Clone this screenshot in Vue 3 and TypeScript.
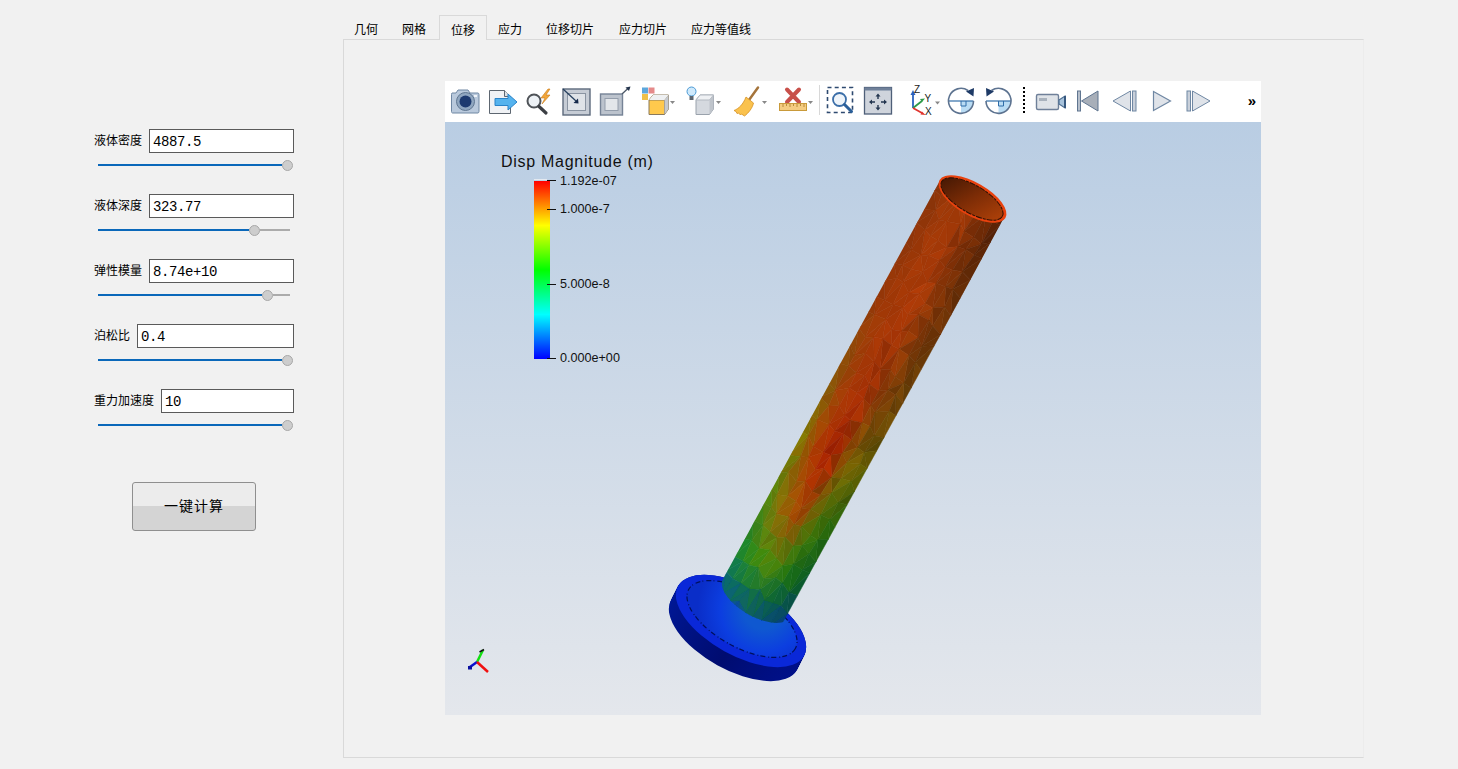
<script setup lang="ts">
const tabs = ["几何", "网格", "位移", "应力", "位移切片", "应力切片", "应力等值线"];
const activeTab = "位移";

const fields = [
  { label: "液体密度", value: "4887.5", fill: 184 },
  { label: "液体深度", value: "323.77", fill: 151 },
  { label: "弹性模量", value: "8.74e+10", fill: 164 },
  { label: "泊松比", value: "0.4", fill: 184 },
  { label: "重力加速度", value: "10", fill: 184 },
];

// colour samples on the tube, rows run from the open end to the base, columns left to right
const rows = [0, 0.3, 0.5, 0.65, 0.8, 0.92, 0.99, 1.08];
const samples: number[][][] = [
  [[132, 50, 10], [160, 58, 8], [160, 56, 7], [120, 44, 6], [80, 30, 6]],
  [[150, 56, 8], [166, 56, 6], [164, 54, 6], [132, 54, 6], [100, 50, 6]],
  [[128, 88, 8], [168, 58, 6], [166, 46, 4], [128, 62, 6], [104, 72, 6]],
  [[124, 130, 2], [172, 60, 2], [176, 28, 0], [120, 96, 2], [84, 86, 2]],
  [[66, 136, 14], [150, 110, 4], [164, 64, 2], [70, 116, 6], [28, 100, 14]],
  [[22, 136, 50], [56, 142, 14], [84, 136, 8], [30, 116, 16], [8, 88, 40]],
  [[8, 110, 110], [14, 120, 70], [20, 116, 50], [10, 100, 60], [6, 72, 90]],
  [[10, 50, 200], [10, 60, 190], [10, 70, 170], [10, 60, 170], [8, 50, 170]],
];

let seed = 41;
function rnd() {
  seed = (seed * 16807) % 2147483647;
  return seed / 2147483647;
}

function colourAt(u: number, v: number, amp: number) {
  let r = 0;
  while (r < rows.length - 2 && v > rows[r + 1]) r++;
  const tv = Math.min(1, Math.max(0, (v - rows[r]) / (rows[r + 1] - rows[r])));
  const cu = Math.max(0, Math.min(3.999, ((u + 1) / 2) * 4));
  const c = Math.floor(cu);
  const tu = cu - c;
  const k = 1 + (rnd() - 0.5) * amp;
  const out = [0, 1, 2].map((i) => {
    const a = samples[r][c][i] * (1 - tu) + samples[r][c + 1][i] * tu;
    const b = samples[r + 1][c][i] * (1 - tu) + samples[r + 1][c + 1][i] * tu;
    return Math.min(255, Math.round((a * (1 - tv) + b * tv) * k));
  });
  return `rgb(${out[0]},${out[1]},${out[2]})`;
}

function place(u: number, v: number) {
  return [972 - 218 * v + 32.5 * u, 199 + 398 * v + 18.5 * u];
}

// faceted tube surface
const facets: { points: string; fill: string }[] = [];
const nu = 8;
const nv = 26;
const grid: number[][][] = [];
for (let j = 0; j <= nv; j++) {
  const line: number[][] = [];
  for (let i = 0; i <= nu; i++) {
    const ju = i === 0 || i === nu ? 0 : (rnd() - 0.5) * 0.1;
    const jv = (rnd() - 0.5) * 0.02;
    line.push([-1 + (2 * i) / nu + ju, (j / nv) * 1.14 - 0.02 + jv]);
  }
  grid.push(line);
}
for (let j = 0; j < nv; j++) {
  for (let i = 0; i < nu; i++) {
    const a = grid[j][i];
    const b = grid[j][i + 1];
    const c = grid[j + 1][i + 1];
    const d = grid[j + 1][i];
    const tris = rnd() > 0.5 ? [[a, b, c], [a, c, d]] : [[a, b, d], [b, c, d]];
    for (const t of tris) {
      const mu = (t[0][0] + t[1][0] + t[2][0]) / 3;
      const mv = (t[0][1] + t[1][1] + t[2][1]) / 3;
      let amp = mu > -0.1 ? 0.24 : 0.07;
      if (mv > 0.9) amp = 0.02;
      else if (mv > 0.72) amp = 0.1;
      const pts = t.map((p) => place(p[0], p[1]).map((n) => n.toFixed(1)).join(",")).join(" ");
      facets.push({ points: pts, fill: colourAt(mu, mv, amp) });
    }
  }
}

const discSteps = Array.from({ length: 16 }, (_, i) => ({
  cx: 734 + (7 * i) / 15,
  cy: 635 - (14 * i) / 15,
}));
</script>

<template>
  <div class="app">
    <aside class="side">
      <div v-for="f in fields" :key="f.label" class="field">
        <div class="field-row">
          <label class="field-label">{{ f.label }}</label>
          <input class="field-input" :value="f.value" readonly />
        </div>
        <div class="slider">
          <div class="slider-fill" :style="{ width: f.fill + 'px' }"></div>
          <div class="slider-knob"></div>
          <div class="slider-rest"></div>
        </div>
      </div>
      <button class="run" type="button">一键计算</button>
    </aside>

    <main class="main">
      <nav class="tabs">
        <div v-for="t in tabs" :key="t" class="tab" :class="{ active: t === activeTab }">{{ t }}</div>
      </nav>
      <section class="pane">
        <div class="viewer">
          <div class="toolbar">
            <!-- camera -->
            <svg width="37" height="41" viewBox="0 0 37 41">
              <path d="M5 12h4l2-3h10l2 3h8a1.500 1.500 0 0 1 1 1.500v17a1.500 1.500 0 0 1-1 1.500H5.500A1.500 1.500 0 0 1 4.500 30.500v-17A1.500 1.500 0 0 1 5 12z" fill="#b9c9dc" stroke="#6f87a3"/>
              <circle cx="18.500" cy="20.500" r="9" fill="#8fa6c0" stroke="#5f7691"/>
              <circle cx="18.500" cy="20.500" r="6" fill="#1d3a70"/>
              <rect x="27" y="14" width="3" height="2" fill="#eef3f8"/>
            </svg>
            <!-- export -->
            <svg width="37" height="41" viewBox="0 0 37 41">
              <path d="M5.500 9.500h15l6 6v17h-21z" fill="#f0f2f5" stroke="#5d6670"/>
              <path d="M20.500 9.500v6h6" fill="#dde1e6" stroke="#5d6670"/>
              <path d="M11 17.500h13v-4.500l9 8-9 8v-4.500H11z" fill="#55b3ee" stroke="#2a83c8"/>
            </svg>
            <!-- lens with spark -->
            <svg width="37" height="41" viewBox="0 0 37 41">
              <circle cx="13" cy="20" r="6.500" fill="#eef2f6" stroke="#4f5358" stroke-width="2"/>
              <path d="M18 25.500l7 6.500" stroke="#3c3f44" stroke-width="3.200" stroke-linecap="round"/>
              <path d="M27 8l-7 9h4l-3 6 8-9h-4l4-6z" fill="#f2a63a" stroke="#c77a1a" stroke-width=".6"/>
            </svg>
            <!-- reset to box -->
            <svg width="37" height="41" viewBox="0 0 37 41">
              <rect x="5" y="8" width="27" height="26" fill="#c6ccd5" stroke="#5d6a7c" stroke-width="1.400"/>
              <rect x="9.500" y="12.500" width="18" height="17" fill="#dfe3e8" stroke="#8a94a2"/>
              <path d="M5 8l13 12" stroke="#27405f" stroke-width="1.300"/>
              <path d="M20.500 22.500l-.5-5-4.500 4.500z" fill="#14284a"/>
            </svg>
            <!-- zoom out box -->
            <svg width="37" height="41" viewBox="0 0 37 41">
              <rect x="5.500" y="13" width="22" height="21" fill="#bcc3cd" stroke="#768396" stroke-width="1.400"/>
              <rect x="10" y="17.500" width="13" height="12" fill="#e3e6ea" stroke="#949eac"/>
              <path d="M27 13l7-6.500" stroke="#4b5868" stroke-width="1.300"/>
              <path d="M35.500 5.500l-5 1 3.500 3.500z" fill="#24344c"/>
            </svg>
            <!-- coloured box -->
            <svg width="48" height="41" viewBox="0 0 48 41">
              <rect x="10" y="6.500" width="6" height="6" fill="#5da7dc"/>
              <rect x="16.500" y="6.500" width="6" height="6" fill="#e58a8a"/>
              <rect x="10" y="13" width="6" height="6" fill="#f0c04a"/>
              <path d="M17 19l4-5h15.500v14l-4 5.500H17z" fill="#ffc94d" stroke="#8a7a5c"/>
              <path d="M17 19h15.500v14.500M32.500 19l4-5" fill="none" stroke="#8a7a5c"/>
              <path d="M17 19l4-5h15.500l-4 5z" fill="#eef0f2"/>
              <path d="M32.500 19l4-5v14l-4 5.500z" fill="#c5c9cf"/>
              <path d="M38 20h5l-2.500 3z" fill="#888"/>
            </svg>
            <!-- light bulb box -->
            <svg width="46" height="41" viewBox="0 0 46 41">
              <circle cx="11.500" cy="10.500" r="4.500" fill="#cfe9fb" stroke="#4b9ad5"/>
              <rect x="9.500" y="15" width="4" height="4" fill="#5d6670"/>
              <path d="M16 19l4-5h13.500v14l-4 5.500H16z" fill="#d5d9df" stroke="#9aa2ac"/>
              <path d="M16 19l4-5h13.500l-4 5z" fill="#eff1f4" stroke="#b3b9c1"/>
              <path d="M29.500 19l4-5v14l-4 5.500z" fill="#bfc4cb"/>
              <path d="M36 20h5l-2.500 3z" fill="#888"/>
            </svg>
            <!-- broom -->
            <svg width="46" height="41" viewBox="0 0 46 41">
              <path d="M32 6.500L23 19" stroke="#a5743b" stroke-width="2.500" stroke-linecap="round"/>
              <path d="M20 16l7.500 6c-1 5-5 10-9 13l-3-2-1 1-2-2-1.500 .5-1-2-2-1c5-2 9-6 12-13.500z" fill="#fac24e" stroke="#d59022" stroke-width=".8"/>
              <path d="M36 20h5l-2.500 3z" fill="#888"/>
            </svg>
            <!-- ruler with cross -->
            <svg width="46" height="41" viewBox="0 0 46 41">
              <path d="M15 8.500l12 12.500M27 8.500L15 21" stroke="#c8504a" stroke-width="4" stroke-linecap="round"/>
              <rect x="7.500" y="22.500" width="27" height="7" fill="#f5cc82" stroke="#c99a3a"/>
              <path d="M11 23v3M14.500 23v2M18 23v3M21.500 23v2M25 23v3M28.500 23v2M32 23v3" stroke="#a87c2a" stroke-width=".8"/>
              <path d="M36 20h5l-2.500 3z" fill="#888"/>
            </svg>
            <div class="tool-sep"></div>
            <!-- zoom to box -->
            <svg width="37" height="41" viewBox="0 0 37 41">
              <rect x="5.500" y="6.500" width="25" height="25" fill="none" stroke="#2e4a70" stroke-width="1.600" stroke-dasharray="4 3.200"/>
              <circle cx="17.500" cy="18.500" r="6.500" fill="#eef4fa" stroke="#3b6ea8" stroke-width="1.800"/>
              <path d="M22.500 23.500l7 7" stroke="#2a5f9a" stroke-width="3" stroke-linecap="round"/>
            </svg>
            <!-- pan frame -->
            <svg width="37" height="41" viewBox="0 0 37 41">
              <rect x="5.500" y="6.500" width="27" height="26.500" fill="#cfd4dc" stroke="#4e5f78" stroke-width="1.300"/>
              <rect x="5.500" y="6.500" width="27" height="3" fill="#6f8099"/>
              <path d="M19 12.500l-2.500 3h5zM19 29.500l-2.500-3h5zM10 21l3-2.500v5zM28 21l-3-2.500v5z" fill="#23354f"/>
              <path d="M19 15v3M19 24v3M13 21h3M22 21h3" stroke="#23354f" stroke-width="1.400"/>
            </svg>
            <!-- axes -->
            <svg width="47" height="41" viewBox="0 0 47 41">
              <path d="M17 27V13" stroke="#2b62c0" stroke-width="1.800"/>
              <path d="M17 9l-2.500 5h5z" fill="#2b62c0"/>
              <path d="M17 27l9-7" stroke="#2f9a48" stroke-width="1.800"/>
              <path d="M29 17.500l-5 .5 2 3z" fill="#2f9a48"/>
              <path d="M17 27l9 5" stroke="#e0342e" stroke-width="1.800"/>
              <path d="M29.500 34l-5-.5 1.500-3z" fill="#e0342e"/>
              <text x="18" y="12" class="axis-letter">Z</text>
              <text x="28.500" y="21" class="axis-letter">Y</text>
              <text x="29" y="34" class="axis-letter">X</text>
              <path d="M39 20.500h5l-2.500 3z" fill="#888"/>
            </svg>
            <!-- rotate cw -->
            <svg width="37" height="41" viewBox="0 0 37 41">
              <path d="M18 20h12a12 12 0 0 1-12 12z" fill="#b9dcf4"/>
              <path d="M18 20v5h5v-5" fill="none" stroke="#2f6da8"/>
              <path d="M5.500 20h25" stroke="#2f6da8" stroke-width="1.200"/>
              <path d="M25 9.500A12.500 12.500 0 1 0 30.500 20" fill="none" stroke="#5d7390" stroke-width="1.600"/>
              <path d="M31 7l-.5 8.500-7.500-5z" fill="#1e3a66"/>
            </svg>
            <!-- rotate ccw -->
            <svg width="37" height="41" viewBox="0 0 37 41">
              <path d="M18.500 20h12a12 12 0 0 1-12 12z" fill="#b9dcf4"/>
              <path d="M18.500 20v5h5v-5" fill="none" stroke="#2f6da8"/>
              <path d="M6 20h25" stroke="#2f6da8" stroke-width="1.200"/>
              <path d="M11.500 9.500A12.500 12.500 0 1 1 6 20" fill="none" stroke="#5d7390" stroke-width="1.600"/>
              <path d="M6 7l.5 8.500 7.500-5z" fill="#1e3a66"/>
            </svg>
            <div class="tool-dots"></div>
            <!-- video camera -->
            <svg width="40" height="41" viewBox="0 0 40 41">
              <rect x="5.500" y="13.500" width="22" height="15" rx="1.500" fill="#dfe3e8" stroke="#6f8099" stroke-width="1.400"/>
              <rect x="8" y="17" width="8" height="3" fill="#a9b2bd"/>
              <path d="M28 19l6-4v12l-6-4z" fill="#a8c3dc" stroke="#4e6f93" stroke-width="1.200"/>
              <rect x="33" y="15" width="2" height="12" fill="#38597f"/>
            </svg>
            <!-- first -->
            <svg width="35" height="41" viewBox="0 0 35 41">
              <rect x="6.500" y="10" width="3" height="20" fill="#b6bfcb" stroke="#5f7590"/>
              <path d="M27 10v20L10.500 20z" fill="#a8afb9" stroke="#5f7590"/>
            </svg>
            <!-- previous -->
            <svg width="37" height="41" viewBox="0 0 37 41">
              <path d="M24.500 10v20L7 20z" fill="#dfe3e9" stroke="#6f87a3"/>
              <rect x="26.500" y="10" width="3.500" height="20" fill="#c9d0da" stroke="#6f87a3"/>
            </svg>
            <!-- play -->
            <svg width="37" height="41" viewBox="0 0 37 41">
              <path d="M10.500 10.500v19l17-9.500z" fill="#dfe3e9" stroke="#6f87a3" stroke-width="1.200"/>
            </svg>
            <!-- next -->
            <svg width="37" height="41" viewBox="0 0 37 41">
              <rect x="7" y="10" width="3.500" height="20" fill="#c9d0da" stroke="#6f87a3"/>
              <path d="M12.500 10v20L30 20z" fill="#dfe3e9" stroke="#6f87a3"/>
            </svg>
            <span class="tool-more">»</span>
          </div>

          <svg class="scene" width="816" height="593" viewBox="445 122 816 593">
            <defs>
              <linearGradient id="bar" x1="0" y1="0" x2="0" y2="1">
                <stop offset="0" stop-color="#ff0000"/>
                <stop offset="0.25" stop-color="#ffff00"/>
                <stop offset="0.5" stop-color="#00ff00"/>
                <stop offset="0.75" stop-color="#00ffff"/>
                <stop offset="1" stop-color="#0000ff"/>
              </linearGradient>
              <linearGradient id="discSide" gradientUnits="userSpaceOnUse" x1="670" y1="600" x2="800" y2="680">
                <stop offset="0" stop-color="#001a9c"/>
                <stop offset="0.6" stop-color="#000c70"/>
                <stop offset="1" stop-color="#001190"/>
              </linearGradient>
              <radialGradient id="cone" gradientUnits="userSpaceOnUse" cx="756" cy="600" r="66">
                <stop offset="0.3" stop-color="#0f58d0"/>
                <stop offset="0.65" stop-color="#0c3ee0"/>
                <stop offset="1" stop-color="#0a2ec8"/>
              </radialGradient>
              <linearGradient id="bore" gradientUnits="userSpaceOnUse" x1="945" y1="185" x2="995" y2="215">
                <stop offset="0" stop-color="#4a1a04"/>
                <stop offset="0.5" stop-color="#7c2c06"/>
                <stop offset="1" stop-color="#a83e08"/>
              </linearGradient>
              <clipPath id="tube">
                <path d="M940 180.500L722.500 580a38 18 30 0 0 68 36L1004 217.500z"/>
              </clipPath>
            </defs>

            <!-- base disc -->
            <ellipse
              v-for="(s, i) in discSteps"
              :key="i"
              :cx="s.cx"
              :cy="s.cy"
              rx="72"
              ry="34.500"
              :transform="`rotate(29 ${s.cx} ${s.cy})`"
              fill="url(#discSide)"
            />
            <ellipse cx="741" cy="621" rx="72" ry="34.500" transform="rotate(29 741 621)" fill="#0a28d8"/>
            <ellipse cx="742" cy="619" rx="61" ry="28" transform="rotate(29 742 619)" fill="url(#cone)" stroke="#00105c" stroke-width="1.200" stroke-dasharray="5 2 1 3"/>

            <!-- tube -->
            <g clip-path="url(#tube)">
              <polygon v-for="(f, i) in facets" :key="i" :points="f.points" :fill="f.fill" :stroke="f.fill" stroke-width="0.5"/>
            </g>

            <!-- open end -->
            <ellipse cx="972.500" cy="199" rx="38" ry="16.500" transform="rotate(30 972.500 199)" fill="#e8420e"/>
            <ellipse cx="972" cy="199" rx="35" ry="13.800" transform="rotate(30 972 199)" fill="url(#bore)" stroke="#2a1004" stroke-width="1" stroke-dasharray="6 1 3 1"/>

            <!-- scalar bar -->
            <text x="501" y="167" class="bar-title">Disp Magnitude (m)</text>
            <rect x="534" y="181" width="16" height="178" fill="url(#bar)"/>
            <path d="M534 179.500H547" stroke="#e4e9f0" stroke-width="1"/>
            <path d="M547 180.500H556M547 209.500H556M547 284.500H556M547 358.500H556" stroke="#111" stroke-width="1"/>
            <text x="560" y="185" class="bar-label">1.192e-07</text>
            <text x="560" y="213" class="bar-label">1.000e-7</text>
            <text x="560" y="288" class="bar-label">5.000e-8</text>
            <text x="560" y="362" class="bar-label">0.000e+00</text>

            <!-- orientation axes -->
            <path d="M477 662L483 650" stroke="#12e012" stroke-width="2.500"/>
            <path d="M479.500 652l4.500-2.500" stroke="#111" stroke-width="1.500"/>
            <path d="M477 662L470 667" stroke="#0a10d0" stroke-width="2.500"/>
            <rect x="468" y="666" width="4" height="3.500" fill="#0a10a0"/>
            <path d="M477 662L488 672" stroke="#f01010" stroke-width="2.500"/>
          </svg>
        </div>
      </section>
    </main>
  </div>
</template>

<style scoped>
.app {
  display: flex;
  width: 1458px;
  height: 769px;
  overflow: hidden;
  background: #f1f1f1;
  font-family: "Noto Sans CJK SC", "Liberation Sans", sans-serif;
  font-size: 12px;
  color: #000;
}

.side {
  flex: none;
  box-sizing: border-box;
  width: 343px;
  padding: 129px 49px 0 94px;
}

.field {
  height: 65px;
}

.field-row {
  display: flex;
  align-items: center;
  gap: 7px;
  height: 24px;
}

.field-label {
  flex: none;
  position: relative;
  top: -1px;
  line-height: 1;
}

.field-input {
  flex: 1;
  min-width: 0;
  box-sizing: border-box;
  height: 24px;
  padding: 2px 0 0 3px;
  border: 1px solid #5a5a5a;
  border-radius: 0;
  background: #fff;
  outline: none;
  font-family: "Liberation Mono", monospace;
  font-size: 14px;
  letter-spacing: -0.4px;
  color: #000;
}

.slider {
  display: flex;
  align-items: flex-start;
  width: 192px;
  height: 11px;
  margin: 7px 0 0 4px;
}

.slider-fill {
  flex: none;
  height: 2px;
  margin-top: 4px;
  background: #0a68ba;
}

.slider-knob {
  flex: none;
  box-sizing: border-box;
  width: 11px;
  height: 11px;
  border: 1px solid #a8a8a8;
  border-radius: 50%;
  background: #cdcdcd;
}

.slider-rest {
  flex: 1;
  height: 2px;
  margin-top: 4px;
  background: #ababab;
}

.run {
  display: block;
  box-sizing: border-box;
  width: 124px;
  height: 49px;
  margin: 28px 0 0 38px;
  padding: 0 0 3px;
  border: 1px solid #8f8f8f;
  border-radius: 3px;
  background: linear-gradient(#ececec 0, #ececec 50%, #d4d4d4 50%, #d4d4d4 100%);
  font-family: "Noto Sans CJK SC", sans-serif;
  font-size: 14px;
  letter-spacing: 1px;
  color: #000;
}

.main {
  flex: none;
  width: 1021px;
  padding-top: 15px;
}

.tabs {
  display: flex;
  align-items: flex-end;
  height: 24px;
  margin-left: -1px;
}

.tab {
  box-sizing: border-box;
  height: 20px;
  padding: 0 12px;
  line-height: 19px;
  white-space: nowrap;
}

.tab:nth-child(6) {
  margin-left: 1px;
}

.tab.active {
  height: 25px;
  width: 48px;
  margin: 0 -1px -1px 1px;
  padding: 4px 11px 0;
  border: 1px solid #d9d9d9;
  border-bottom: 0;
  background: #f1f1f1;
  position: relative;
}

.pane {
  box-sizing: border-box;
  height: 719px;
  padding: 41px 0 0 101px;
  border: 1px solid #d9d9d9;
  border-right-color: #ececec;
}

.viewer {
  width: 816px;
  height: 634px;
}

.toolbar {
  display: flex;
  align-items: stretch;
  box-sizing: border-box;
  height: 41px;
  padding: 0 5px 0 2px;
  background: #fff;
}

.toolbar svg {
  flex: none;
  display: block;
}

.tool-sep {
  flex: none;
  width: 1px;
  height: 30px;
  margin: 4px 2px 0 1px;
  background: #d8d8d8;
}

.tool-dots {
  flex: none;
  width: 2px;
  height: 26px;
  margin: 6px 6px 0 6px;
  background: repeating-linear-gradient(#000 0 2px, transparent 2px 4px);
}

.tool-more {
  margin-left: auto;
  align-self: center;
  padding-bottom: 2px;
  font-family: "Liberation Sans", sans-serif;
  font-size: 15px;
  font-weight: 700;
  line-height: 1;
  color: #000;
}

.scene {
  display: block;
  background: linear-gradient(#b9cde3, #e4e7ec);
}

.axis-letter {
  font-family: "Liberation Sans", sans-serif;
  font-size: 10px;
  fill: #222;
}

.bar-title {
  font-family: "Liberation Sans", sans-serif;
  font-size: 16px;
  letter-spacing: 0.72px;
  fill: #111;
}

.bar-label {
  font-family: "Liberation Sans", sans-serif;
  font-size: 12.6px;
  fill: #111;
}
</style>
